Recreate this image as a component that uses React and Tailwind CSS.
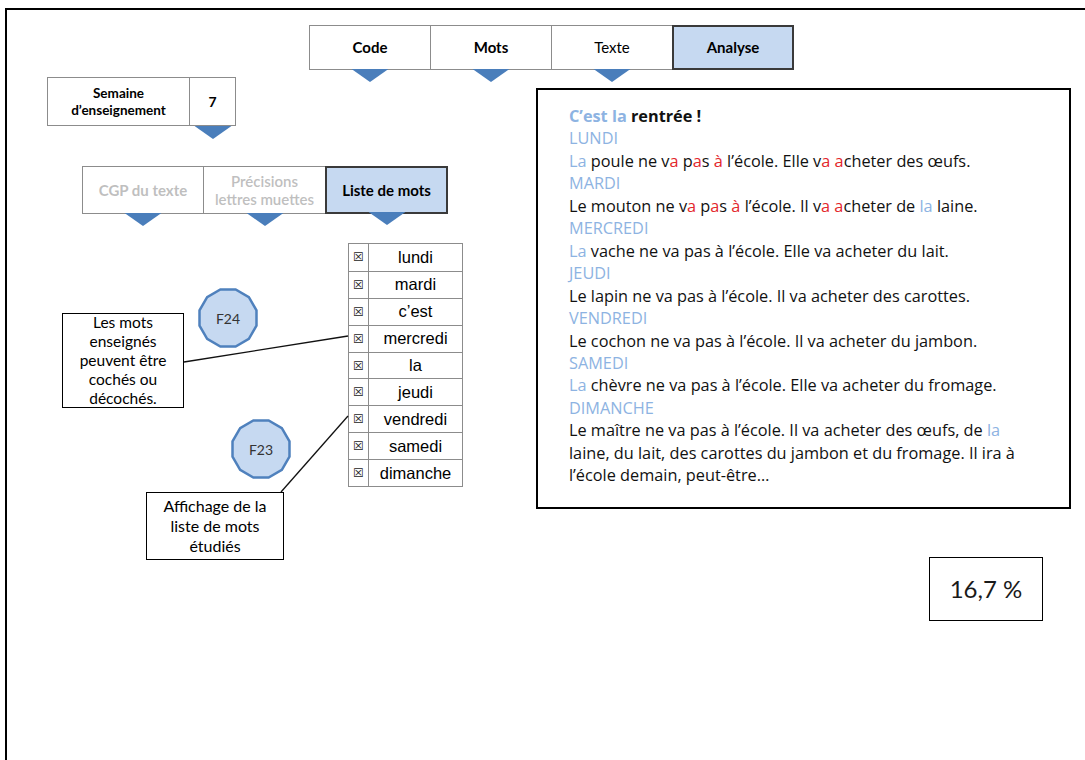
import React from 'react';

const font = { fontFamily: 'Lato, "Open Sans", "Noto Sans", sans-serif' };

const Arrow = ({ className = '' }) => (
  <svg width="37" height="13" viewBox="0 0 37 13" className={`absolute top-full left-1/2 -translate-x-1/2 ${className}`}>
    <polygon points="0,0 37,0 18.5,13" fill="#4a7ebb" />
  </svg>
);

const Tab = ({ label, bold, active, arrow, first }) => (
  <div
    className={`relative w-[122px] h-[45px] flex items-center justify-center text-[15px] text-black ${first ? '' : '-ml-px'} ${
      active ? 'border-2 border-[#3a3a3a] bg-[#c6d9f1] font-bold' : 'border border-[#8c8c8c] bg-white'
    } ${bold ? 'font-bold' : ''}`}
  >
    {label}
    {arrow && <Arrow />}
  </div>
);

const Badge = ({ label, className }) => (
  <div className={`absolute w-[62px] h-[62px] flex items-center justify-center ${className}`}>
    <svg width="62" height="62" viewBox="0 0 62 62" className="absolute inset-0">
      <polygon
        points={Array.from({ length: 12 }, (_, i) => {
          const a = ((15 + i * 30) * Math.PI) / 180;
          return `${31 + 29.5 * Math.cos(a)},${31 + 29.5 * Math.sin(a)}`;
        }).join(' ')}
        fill="#c6d9f1"
        stroke="#4f81bd"
        strokeWidth="2.5"
      />
    </svg>
    <span className="relative text-[14px] text-[#333]">{label}</span>
  </div>
);

const B = ({ children }) => <span className="text-[#8db3e2]">{children}</span>;
const R = ({ children }) => <span className="text-[#e3262b]">{children}</span>;

const words = ['lundi', 'mardi', 'c\u2019est', 'mercredi', 'la', 'jeudi', 'vendredi', 'samedi', 'dimanche'];

export default function App() {
  return (
    <div className="relative w-[1085px] h-[760px] overflow-hidden bg-white pt-2 pl-[5px]" style={font}>
      <div className="h-full border-t-2 border-l-2 border-black">
        {/* top tabs */}
        <div className="flex mt-[15px] ml-[302px]">
          <Tab label="Code" bold arrow first />
          <Tab label="Mots" bold arrow />
          <Tab label="Texte" arrow />
          <Tab label="Analyse" active />
        </div>

        <div className="flex mt-[7px]">
          {/* left column */}
          <div className="w-[417px] ml-[40px]">
            <div className="flex h-[49px] w-[189px] border border-[#8c8c8c] text-[13.5px] font-bold text-black">
              <div className="w-[142px] flex items-center justify-center text-center leading-[17px] border-r border-[#8c8c8c]">
                Semaine
                <br />
                d’enseignement
              </div>
              <div className="relative flex-1 flex items-center justify-center text-[14px]">
                7
                <Arrow className="mt-px" />
              </div>
            </div>

            <div className="flex h-[48px] w-[366px] ml-[35px] mt-[40px] text-[15px] font-bold">
              <div className="relative w-[122px] border border-[#8c8c8c] flex items-center justify-center text-[#bfbfbf]">
                CGP du texte
                <Arrow />
              </div>
              <div className="relative w-[123px] -ml-px border border-[#8c8c8c] flex items-center justify-center text-center leading-[18px] text-[#bfbfbf] font-semibold">
                Précisions
                <br />
                lettres muettes
                <Arrow />
              </div>
              <div className="relative flex-1 -ml-px border-2 border-[#3a3a3a] bg-[#c6d9f1] flex items-center justify-center text-black">
                Liste de mots
                <Arrow />
              </div>
            </div>

            <div
              className="ml-[301px] mt-[29px] w-[115px] border border-[#8c8c8c] text-[16.5px] text-black"
              style={{ fontFamily: '"Liberation Sans", Arial, sans-serif' }}
            >
              {words.map((w, i) => (
                <div key={w} className={`flex h-[26.9px] ${i ? 'border-t border-[#8c8c8c]' : ''}`}>
                  <div className="w-[20px] border-r border-[#8c8c8c] flex items-center justify-center text-[12px] text-[#222]">☒</div>
                  <div className="flex-1 flex items-center justify-center">{w}</div>
                </div>
              ))}
            </div>
          </div>

          {/* right column */}
          <div className="ml-[72px] mt-[11px]">
            <div
              className="w-[535px] h-[421px] border-2 border-black pt-[15px] pl-[31px] text-[16.3px] leading-[22.45px] text-[#111]"
              style={{ fontFamily: '"Open Sans", Lato, sans-serif' }}
            >
              <div className="font-bold">
                <B>C’est la</B> rentrée !
              </div>
              <div className="text-[#8db3e2]">LUNDI</div>
              <div>
                <B>La</B> poule ne v<R>a</R> p<R>a</R>s <R>à</R> l’école. Elle v<R>a</R> <R>a</R>cheter des œufs.
              </div>
              <div className="text-[#8db3e2]">MARDI</div>
              <div>
                Le mouton ne v<R>a</R> p<R>a</R>s <R>à</R> l’école. Il v<R>a</R> <R>a</R>cheter de <B>la</B> laine.
              </div>
              <div className="text-[#8db3e2]">MERCREDI</div>
              <div>
                <B>La</B> vache ne va pas à l’école. Elle va acheter du lait.
              </div>
              <div className="text-[#8db3e2]">JEUDI</div>
              <div>Le lapin ne va pas à l’école. Il va acheter des carottes.</div>
              <div className="text-[#8db3e2]">VENDREDI</div>
              <div>Le cochon ne va pas à l’école. Il va acheter du jambon.</div>
              <div className="text-[#8db3e2]">SAMEDI</div>
              <div>
                <B>La</B> chèvre ne va pas à l’école. Elle va acheter du fromage.
              </div>
              <div className="text-[#8db3e2]">DIMANCHE</div>
              <div>
                Le maître ne va pas à l’école. Il va acheter des œufs, de <B>la</B>
                <br />
                laine, du lait, des carottes du jambon et du fromage. Il ira à
                <br />
                l’école demain, peut-être…
              </div>
            </div>

            <div className="ml-[393px] mt-[48px] w-[114px] h-[64px] border border-black flex items-center justify-center text-[24px] text-[#1a1a1a]">
              16,7 %
            </div>
          </div>
        </div>
      </div>

      {/* annotations */}
      <svg className="absolute inset-0 pointer-events-none" width="1085" height="760">
        <line x1="184" y1="362" x2="348" y2="336" stroke="#111" strokeWidth="1.3" />
        <line x1="281" y1="492" x2="348" y2="416" stroke="#111" strokeWidth="1.3" />
      </svg>

      <Badge label="F24" className="left-[197px] top-[287px]" />
      <Badge label="F23" className="left-[230px] top-[418px]" />

      <div className="absolute left-[62px] top-[313px] w-[122px] h-[95px] border border-black bg-white flex items-center justify-center text-center text-[15.5px] leading-[19px] text-black">
        Les mots
        <br />
        enseignés
        <br />
        peuvent être
        <br />
        cochés ou
        <br />
        décochés.
      </div>

      <div className="absolute left-[146px] top-[492px] w-[138px] h-[68px] border border-black bg-white flex items-center justify-center text-center text-[16px] leading-[20px] text-black">
        Affichage de la
        <br />
        liste de mots
        <br />
        étudiés
      </div>
    </div>
  );
}
